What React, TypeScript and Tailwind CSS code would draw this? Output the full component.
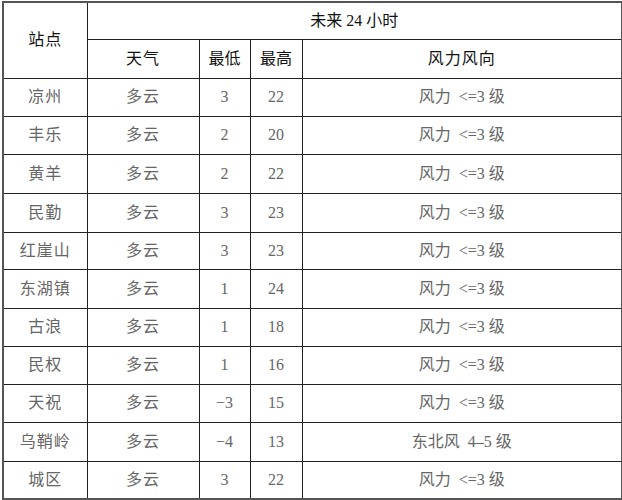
const rows: [string, string, string, string, string][] = [
  ['凉州', '多云', '3', '22', '风力  <=3 级'],
  ['丰乐', '多云', '2', '20', '风力  <=3 级'],
  ['黄羊', '多云', '2', '22', '风力  <=3 级'],
  ['民勤', '多云', '3', '23', '风力  <=3 级'],
  ['红崖山', '多云', '3', '23', '风力  <=3 级'],
  ['东湖镇', '多云', '1', '24', '风力  <=3 级'],
  ['古浪', '多云', '1', '18', '风力  <=3 级'],
  ['民权', '多云', '1', '16', '风力  <=3 级'],
  ['天祝', '多云', '−3', '15', '风力  <=3 级'],
  ['乌鞘岭', '多云', '−4', '13', '东北风  4–5 级'],
  ['城区', '多云', '3', '22', '风力  <=3 级'],
];

const rowHeights = ['h-[38px]', 'h-[38px]', 'h-[39px]', 'h-[39px]', 'h-[37px]', 'h-[39px]', 'h-[38px]', 'h-[38px]', 'h-[38px]', 'h-[39px]', 'h-[38px]'];

const cell = 'border border-[#222] text-center align-middle p-0';

export default function App() {
  return (
    <div
      className="w-[622px] h-[500px] bg-white pt-px pl-[2px] overflow-hidden"
      style={{ fontFamily: '"Liberation Serif", "Noto Sans CJK SC", serif' }}
    >
      <table className="table-fixed border-collapse w-[619px] border-2 border-[#555] text-[16px]">
        <colgroup>
          <col className="w-[84px]" />
          <col className="w-[112px]" />
          <col className="w-[51px]" />
          <col className="w-[52px]" />
          <col className="w-[320px]" />
        </colgroup>
        <thead className="text-[#111]">
          <tr className="h-[37px]">
            <th rowSpan={2} className={`${cell} font-normal tracking-[1px]`}>站点</th>
            <th colSpan={4} className={`${cell} font-normal`}>未来 24 小时</th>
          </tr>
          <tr className="h-[39px]">
            <th className={`${cell} font-normal tracking-[1px]`}>天气</th>
            <th className={`${cell} font-normal`}>最低</th>
            <th className={`${cell} font-normal`}>最高</th>
            <th className={`${cell} font-normal tracking-[1px]`}>风力风向</th>
          </tr>
        </thead>
        <tbody className="text-[#666]">
          {rows.map((r, i) => (
            <tr key={r[0]} className={rowHeights[i]}>
              <td className={`${cell} tracking-[1px]`}>{r[0]}</td>
              <td className={`${cell} tracking-[1px]`}>{r[1]}</td>
              <td className={cell}>{r[2]}</td>
              <td className={cell}>{r[3]}</td>
              <td className={`${cell} whitespace-pre`}>{r[4]}</td>
            </tr>
          ))}
        </tbody>
      </table>
    </div>
  );
}
